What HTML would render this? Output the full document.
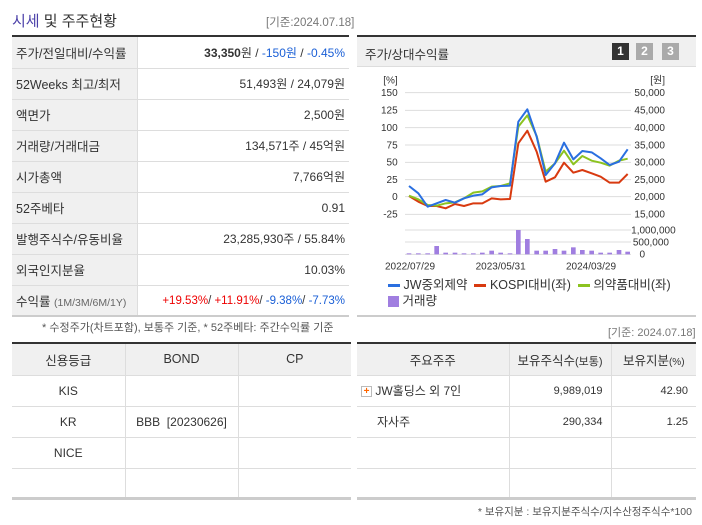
<!DOCTYPE html>
<html><head><meta charset="utf-8"><style>
*{margin:0;padding:0;box-sizing:border-box}
body{width:702px;height:525px;background:#fff;font-family:"Liberation Sans","Noto Sans CJK KR",sans-serif;color:#333;position:relative;overflow:hidden;font-size:12px}
.a{position:absolute}
table{border-collapse:collapse;position:absolute;table-layout:fixed}
td{font-size:12px;color:#333}
.t1 td{height:31px;border-bottom:1px solid #ddd;padding:0 4px}
.t1 td.l{background:#f0f0f0;border-right:1px solid #ddd;text-align:left;font-size:12.5px}
.t1 td.r{text-align:right}
.t2 td{height:31px;border-bottom:1px solid #ddd;border-right:1px solid #ddd;text-align:center}
.t2 td:last-child{border-right:none}
.t2 tr.h td{background:#f0f0f0;font-size:12.5px;height:31px}
</style></head><body>
<div class="a" style="left:12px;top:10px;font-size:15px;color:#333"><span style="color:#4a3fa8">시세</span> 및 주주현황</div>
<div class="a" style="left:266px;top:14px;font-size:11.5px;color:#777">[기준:2024.07.18]</div>
<div class="a" style="left:12px;top:35px;width:337px;height:2px;background:#333"></div>
<table class="t1" style="left:12px;top:37px;width:337px">
<colgroup><col style="width:125px"><col></colgroup>
<tr><td class="l">주가/전일대비/수익률</td><td class="r"><b>33,350</b>원 / <span style="color:#1a5fd6">-150원</span> / <span style="color:#1a5fd6">-0.45%</span></td></tr>
<tr><td class="l">52Weeks 최고/최저</td><td class="r">51,493원 / 24,079원</td></tr>
<tr><td class="l">액면가</td><td class="r">2,500원</td></tr>
<tr><td class="l">거래량/거래대금</td><td class="r">134,571주 / 45억원</td></tr>
<tr><td class="l">시가총액</td><td class="r">7,766억원</td></tr>
<tr><td class="l">52주베타</td><td class="r">0.91</td></tr>
<tr><td class="l">발행주식수/유동비율</td><td class="r">23,285,930주 / 55.84%</td></tr>
<tr><td class="l">외국인지분율</td><td class="r">10.03%</td></tr>
<tr><td class="l">수익률 <span style="font-size:10.5px;color:#666">(1M/3M/6M/1Y)</span></td><td class="r" style="font-size:11.5px"><span style="color:#e00">+19.53%</span>/ <span style="color:#e00">+11.91%</span>/ <span style="color:#1a5fd6">-9.38%</span>/ <span style="color:#1a5fd6">-7.73%</span></td></tr>
</table>
<div class="a" style="left:12px;top:315px;width:337px;height:2px;background:#ccc"></div>
<div class="a" style="left:42px;top:319px;font-size:11px;color:#555">* 수정주가(차트포함), 보통주 기준, * 52주베타: 주간수익률 기준</div>

<!-- chart panel -->
<div class="a" style="left:357px;top:35px;width:339px;height:2px;background:#333"></div>
<div class="a" style="left:357px;top:37px;width:339px;height:30px;background:#f0f0f0;border-bottom:1px solid #ddd"></div>
<div class="a" style="left:365px;top:44px;font-size:12.5px">주가/상대수익률</div>
<div class="a" style="left:612px;top:43px;width:17px;height:17px;background:#333;color:#fff;font-weight:bold;text-align:center;line-height:17px;font-size:12px">1</div>
<div class="a" style="left:636px;top:43px;width:17px;height:17px;background:#aaa;color:#fff;font-weight:bold;text-align:center;line-height:17px;font-size:12px">2</div>
<div class="a" style="left:662px;top:43px;width:17px;height:17px;background:#aaa;color:#fff;font-weight:bold;text-align:center;line-height:17px;font-size:12px">3</div>
<svg class="a" style="left:355px;top:30px" width="347" height="280" viewBox="0 0 1041 840">
<g stroke="#ddd" stroke-width="3">
<line x1="150" y1="188" x2="828" y2="188"/><line x1="150" y1="241" x2="828" y2="241"/><line x1="150" y1="293" x2="828" y2="293"/><line x1="150" y1="345" x2="828" y2="345"/><line x1="150" y1="397" x2="828" y2="397"/><line x1="150" y1="449" x2="828" y2="449"/><line x1="150" y1="500" x2="828" y2="500"/><line x1="150" y1="553" x2="828" y2="553"/>
<line x1="150" y1="600" x2="828" y2="600"/><line x1="150" y1="636" x2="828" y2="636"/><line x1="150" y1="673" x2="828" y2="673"/>
</g>
<g fill="#a07ee0">
<rect x="155" y="670" width="14" height="3"/><rect x="183" y="670" width="14" height="3"/><rect x="211" y="670" width="14" height="3"/><rect x="238" y="648" width="14" height="25"/><rect x="265" y="668" width="14" height="5"/><rect x="293" y="668" width="14" height="5"/><rect x="320" y="670" width="14" height="3"/><rect x="348" y="670" width="14" height="3"/><rect x="375" y="668" width="14" height="5"/><rect x="403" y="662" width="14" height="11"/><rect x="430" y="668" width="14" height="5"/><rect x="458" y="670" width="14" height="3"/><rect x="483" y="600" width="14" height="73"/><rect x="510" y="627" width="14" height="46"/><rect x="538" y="662" width="14" height="11"/><rect x="565" y="662" width="14" height="11"/><rect x="593" y="657" width="14" height="16"/><rect x="620" y="662" width="14" height="11"/><rect x="648" y="652" width="14" height="21"/><rect x="675" y="660" width="14" height="13"/><rect x="703" y="662" width="14" height="11"/><rect x="730" y="668" width="14" height="5"/><rect x="757" y="668" width="14" height="5"/><rect x="785" y="660" width="14" height="13"/><rect x="811" y="665" width="14" height="8"/>
</g>
<g fill="none" stroke-width="6" stroke-linejoin="round">
<polyline stroke="#d83a10" points="162,498 190,515 218,528 245,528 272,535 300,522 327,528 355,520 382,520 410,505 437,508 465,507 490,340 517,302 545,365 572,455 600,442 627,398 655,428 682,420 710,430 737,440 764,458 792,458 818,432"/>
<polyline stroke="#8cc320" points="162,497 190,508 218,525 245,527 272,520 300,517 327,505 355,488 382,484 410,470 437,468 465,460 490,290 517,256 545,318 572,425 600,400 627,362 655,403 682,378 710,392 737,398 764,407 792,392 818,386"/>
<polyline stroke="#2a6fe0" points="162,468 190,490 218,530 245,520 272,510 300,518 327,505 355,497 382,493 410,472 437,468 465,467 490,275 517,238 545,320 572,435 600,400 627,338 655,388 682,363 710,367 737,385 764,405 792,395 818,358"/>
</g>
<g font-size="30" fill="#333" text-anchor="end" font-family="Liberation Sans,sans-serif">
<text x="128" y="160">[%]</text><text x="128" y="198">150</text><text x="128" y="251">125</text><text x="128" y="303">100</text><text x="128" y="355">75</text><text x="128" y="407">50</text><text x="128" y="459">25</text><text x="128" y="510">0</text><text x="128" y="563">-25</text>
<text x="930" y="160">[원]</text><text x="930" y="198">50,000</text><text x="930" y="251">45,000</text><text x="930" y="303">40,000</text><text x="930" y="355">35,000</text><text x="930" y="407">30,000</text><text x="930" y="459">25,000</text><text x="930" y="510">20,000</text><text x="930" y="563">15,000</text>
<text x="962" y="610">1,000,000</text><text x="942" y="646">500,000</text><text x="870" y="683">0</text>
</g>
<g font-size="30" fill="#333" text-anchor="middle"><text x="165" y="718">2022/07/29</text><text x="437" y="718">2023/05/31</text><text x="708" y="718">2024/03/29</text></g>
</svg>
<div class="a" style="left:388px;top:277px;font-size:12.5px;line-height:16px;color:#333">
<span style="display:inline-block;width:12px;height:3px;background:#2a6fe0;vertical-align:middle"></span> JW중외제약&nbsp;&nbsp;<span style="display:inline-block;width:12px;height:3px;background:#d83a10;vertical-align:middle"></span> KOSPI대비(좌)&nbsp;&nbsp;<span style="display:inline-block;width:12px;height:3px;background:#8cc320;vertical-align:middle"></span> 의약품대비(좌)<br>
<span style="display:inline-block;width:11px;height:11px;background:#a07ee0;vertical-align:middle"></span> 거래량</div>
<div class="a" style="left:357px;top:315px;width:339px;height:2px;background:#ccc"></div>
<div class="a" style="left:608px;top:324px;font-size:11px;color:#777">[기준: 2024.07.18]</div>

<!-- bottom tables -->
<div class="a" style="left:12px;top:342px;width:339px;height:2px;background:#333"></div>
<table class="t2" style="left:12px;top:344px;width:339px">
<colgroup><col style="width:113px"><col style="width:113px"><col></colgroup>
<tr class="h"><td>신용등급</td><td>BOND</td><td>CP</td></tr>
<tr><td>KIS</td><td></td><td></td></tr>
<tr><td>KR</td><td>BBB &nbsp;[20230626]</td><td></td></tr>
<tr><td>NICE</td><td></td><td></td></tr>
<tr><td></td><td></td><td></td></tr>
</table>
<div class="a" style="left:12px;top:497px;width:339px;height:3px;background:#ccc"></div>
<div class="a" style="left:357px;top:342px;width:339px;height:2px;background:#333"></div>
<table class="t2" style="left:357px;top:344px;width:339px">
<colgroup><col style="width:152px"><col style="width:102px"><col></colgroup>
<tr class="h"><td>주요주주</td><td>보유주식수<span style="font-size:11px">(보통)</span></td><td>보유지분<span style="font-size:10px">(%)</span></td></tr>
<tr><td style="text-align:left;padding-left:4px"><span style="display:inline-block;width:11px;height:11px;border:1px solid #bbb;color:#f60;font-size:10px;line-height:9px;text-align:center;vertical-align:middle;font-weight:bold">+</span> JW홀딩스 외 7인</td><td style="text-align:right;padding-right:8px;font-size:11px">9,989,019</td><td style="text-align:right;padding-right:8px;font-size:11px">42.90</td></tr>
<tr><td style="text-align:left;padding-left:20px">자사주</td><td style="text-align:right;padding-right:8px;font-size:11px">290,334</td><td style="text-align:right;padding-right:8px;font-size:11px">1.25</td></tr>
<tr><td></td><td></td><td></td></tr>
<tr><td></td><td></td><td></td></tr>
</table>
<div class="a" style="left:357px;top:497px;width:339px;height:3px;background:#ccc"></div>
<div class="a" style="right:10px;top:504px;font-size:10.5px;color:#555">* 보유지분 : 보유지분주식수/지수산정주식수*100</div>
</body></html>
